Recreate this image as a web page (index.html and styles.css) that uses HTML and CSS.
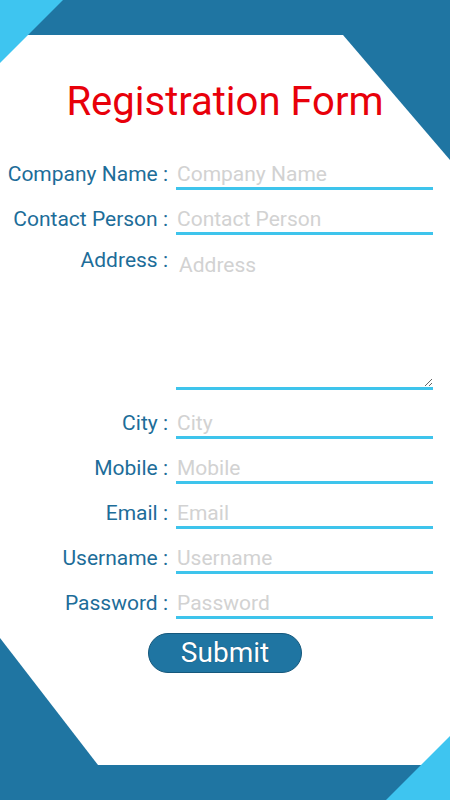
FILE: index.html
```html
<!DOCTYPE html>
<html lang="en">

<head>
    <title>Registration Form</title>
    <link rel="stylesheet" href="styles.css">
</head>

<body>
    <svg class="backdrop" viewBox="0 0 450 800" preserveAspectRatio="none">
        <rect width="450" height="800" fill="#1f75a2" />
        <polygon points="0,35 343,35 450,160 450,765 98,765 0,638" fill="#ffffff" />
        <polygon points="0,0 63,0 0,63" fill="#3ec5f0" />
        <polygon points="450,736 450,800 386,800" fill="#3ec5f0" />
    </svg>

    <div class="page">
        <h1 class="title">Registration Form</h1>

        <form class="regForm" onsubmit="return false">
            <div class="fields">
                <label for="company">Company Name :</label>
                <input type="text" id="company" placeholder="Company Name">

                <label for="contact">Contact Person :</label>
                <input type="text" id="contact" placeholder="Contact Person">

                <label for="address" class="topLabel">Address :</label>
                <textarea id="address" placeholder="Address"></textarea>

                <label for="city">City :</label>
                <input type="text" id="city" placeholder="City">

                <label for="mobile">Mobile :</label>
                <input type="text" id="mobile" placeholder="Mobile">

                <label for="email">Email :</label>
                <input type="text" id="email" placeholder="Email">

                <label for="username">Username :</label>
                <input type="text" id="username" placeholder="Username">

                <label for="password">Password :</label>
                <input type="password" id="password" placeholder="Password">
            </div>

            <div class="actions">
                <button type="submit" class="submitBtn">Submit</button>
            </div>
        </form>
    </div>
</body>

</html>
```

FILE: styles.css
```css
html,
body {
    margin: 0;
    height: 800px;
    overflow: hidden;
}

body {
    font-family: Roboto, "Noto Sans", sans-serif;
    position: relative;
}

.backdrop {
    position: absolute;
    left: 0;
    top: 0;
    width: 450px;
    height: 800px;
    z-index: -1;
}

.page {
    padding-top: 78px;
}

.title {
    margin: 0;
    text-align: center;
    font-weight: 400;
    font-size: 40px;
    line-height: 47px;
    color: #e8000a;
}

.regForm {
    margin-top: 35px;
}

.fields {
    display: grid;
    grid-template-columns: 168px 257px;
    column-gap: 8px;
    row-gap: 15px;
    align-items: baseline;
}

.fields label {
    text-align: right;
    font-size: 21px;
    color: #1d6d99;
    white-space: nowrap;
}

.fields .topLabel {
    align-self: start;
    margin-top: -2px;
}

input,
textarea {
    box-sizing: border-box;
    width: 257px;
    border: 0px solid;
    border-bottom: 3px solid #3ec4ec;
    outline: none;
    background: transparent;
    font-family: Roboto, "Noto Sans", sans-serif;
    font-size: 21px;
    color: #333;
    margin: 0;
}

input {
    height: 30px;
    padding: 0 1px;
}

textarea {
    height: 140px;
    padding: 3px 3px 2px;
    margin-bottom: 4px;
    resize: vertical;
}

::placeholder {
    color: #d2d2d2;
}

.actions {
    display: flex;
    justify-content: center;
    margin-top: 14px;
}

.submitBtn {
    width: 154px;
    height: 40px;
    border: 1px solid #15587c;
    border-radius: 20px;
    background-color: #1f75a2;
    color: #ffffff;
    font-family: Roboto, "Noto Sans", sans-serif;
    font-size: 28px;
    line-height: 1;
    padding: 0;
    text-shadow: 0 0 1px #0d4566;
}
```
